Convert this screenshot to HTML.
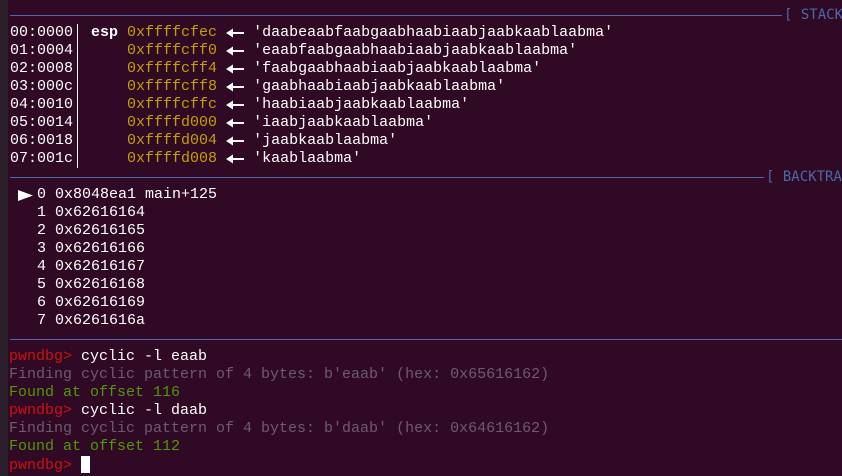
<!DOCTYPE html>
<html><head><style>
html,body{margin:0;padding:0;}
body{width:842px;height:476px;background:#300a24;position:relative;overflow:hidden;font-family:"Liberation Mono",monospace;font-size:15px;color:#fff;}
.strip{position:absolute;left:0;top:0;width:8px;height:476px;background:#2c1f2c;}
.l{position:absolute;left:10px;height:18px;line-height:18px;white-space:pre;}
.sep{position:absolute;left:10px;height:1px;background:#4a6aa8;}
.hd{position:absolute;height:18px;line-height:18px;color:#4a6aa8;white-space:pre;font-family:"DejaVu Sans Mono",monospace;font-size:14px;}
.y{color:#c4a000}.b{font-weight:bold}.g{color:#6e5a72}.gr{color:#4e9a06}.r{color:#d01010}
.vbar{position:absolute;left:77px;top:24px;width:1px;height:144px;background:#fff;}
.cur{display:inline-block;width:9px;height:17px;background:#fff;vertical-align:-4px;}
.ar{display:inline-block;width:27px;height:18px;vertical-align:top;position:relative;}
.ar svg{position:absolute;left:0;top:3px;}
</style></head><body>
<div class="strip"></div>
<svg width="0" height="0" style="position:absolute"><defs><symbol id="arr" viewBox="0 0 18 12"><path d="M0 6 L7 1.5 L7 10.5 Z" fill="#fff"/><rect x="6" y="5" width="12" height="2" fill="#fff"/></symbol></defs></svg>
<div class="sep" style="top:15px;width:772px"></div><div class="hd" style="left:784px;top:6px">[ STACK</div>
<div class="vbar"></div>
<div class="l" style="top:24px">00:0000  <span class="b">esp</span> <span class="y">0xffffcfec</span> <span class="ar"><svg width="18" height="12"><use href="#arr"/></svg></span>'daabeaabfaabgaabhaabiaabjaabkaablaabma'</div>
<div class="l" style="top:42px">01:0004      <span class="y">0xffffcff0</span> <span class="ar"><svg width="18" height="12"><use href="#arr"/></svg></span>'eaabfaabgaabhaabiaabjaabkaablaabma'</div>
<div class="l" style="top:60px">02:0008      <span class="y">0xffffcff4</span> <span class="ar"><svg width="18" height="12"><use href="#arr"/></svg></span>'faabgaabhaabiaabjaabkaablaabma'</div>
<div class="l" style="top:78px">03:000c      <span class="y">0xffffcff8</span> <span class="ar"><svg width="18" height="12"><use href="#arr"/></svg></span>'gaabhaabiaabjaabkaablaabma'</div>
<div class="l" style="top:96px">04:0010      <span class="y">0xffffcffc</span> <span class="ar"><svg width="18" height="12"><use href="#arr"/></svg></span>'haabiaabjaabkaablaabma'</div>
<div class="l" style="top:114px">05:0014      <span class="y">0xffffd000</span> <span class="ar"><svg width="18" height="12"><use href="#arr"/></svg></span>'iaabjaabkaablaabma'</div>
<div class="l" style="top:132px">06:0018      <span class="y">0xffffd004</span> <span class="ar"><svg width="18" height="12"><use href="#arr"/></svg></span>'jaabkaablaabma'</div>
<div class="l" style="top:150px">07:001c      <span class="y">0xffffd008</span> <span class="ar"><svg width="18" height="12"><use href="#arr"/></svg></span>'kaablaabma'</div>
<div class="sep" style="top:177px;width:754px"></div><div class="hd" style="left:766px;top:168px">[ BACKTRACE</div>
<svg style="position:absolute;left:18px;top:190px" width="15" height="11"><path d="M0 0 L15 5.5 L0 11 Z" fill="#fff"/></svg>
<div class="l" style="top:186px">   0 0x8048ea1 main+125</div>
<div class="l" style="top:204px">   1 0x62616164</div>
<div class="l" style="top:222px">   2 0x62616165</div>
<div class="l" style="top:240px">   3 0x62616166</div>
<div class="l" style="top:258px">   4 0x62616167</div>
<div class="l" style="top:276px">   5 0x62616168</div>
<div class="l" style="top:294px">   6 0x62616169</div>
<div class="l" style="top:312px">   7 0x6261616a</div>
<div class="sep" style="top:339px;width:832px"></div>
<div class="l" style="top:348px;left:9px"><span class="r">pwndbg&gt;</span> cyclic -l eaab</div>
<div class="l g" style="top:366px;left:9px">Finding cyclic pattern of 4 bytes: b'eaab' (hex: 0x65616162)</div>
<div class="l gr" style="top:384px;left:9px">Found at offset 116</div>
<div class="l" style="top:402px;left:9px"><span class="r">pwndbg&gt;</span> cyclic -l daab</div>
<div class="l g" style="top:420px;left:9px">Finding cyclic pattern of 4 bytes: b'daab' (hex: 0x64616162)</div>
<div class="l gr" style="top:438px;left:9px">Found at offset 112</div>
<div class="l" style="top:456px;left:9px"><span class="r">pwndbg&gt;</span> <span class="cur"></span></div>
</body></html>
